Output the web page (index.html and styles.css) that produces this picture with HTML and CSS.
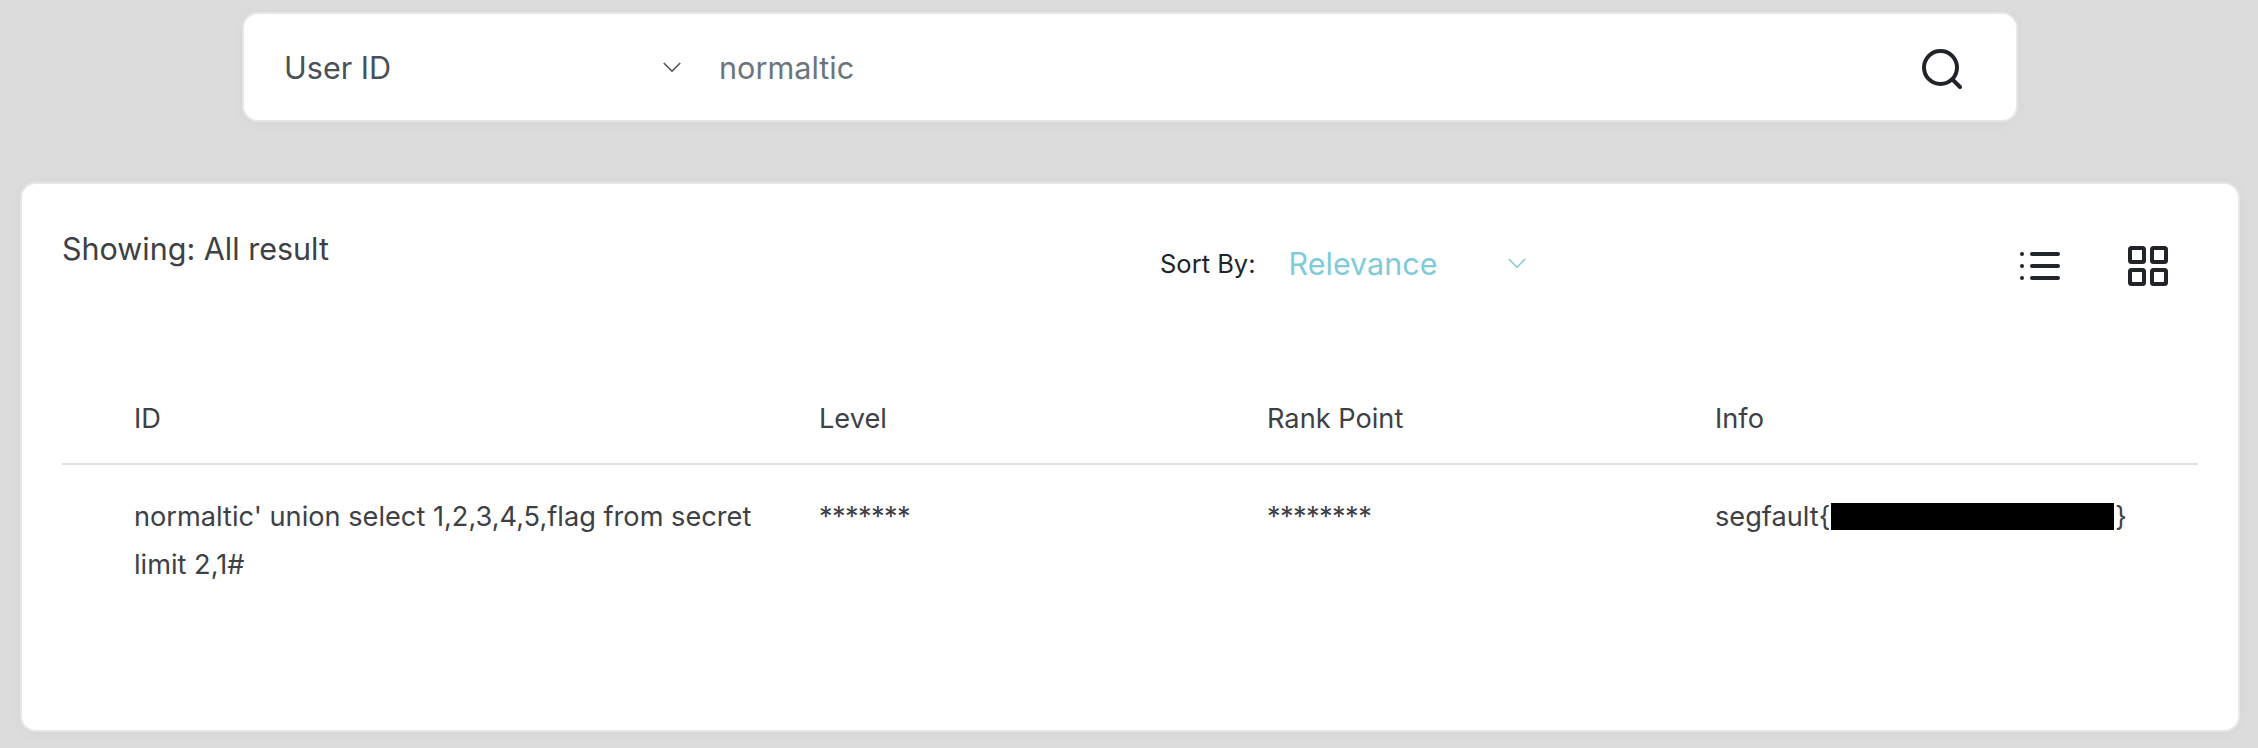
FILE: index.html
```html
<!DOCTYPE html>
<html lang="en">
<head>
    <meta charset="UTF-8">
    <meta name="viewport" content="width=device-width, initial-scale=1.0">
    <title>Ranking</title>
    <link rel="stylesheet" href="styles.css">
</head>
<body>
    <div class="search-card">
        <div class="search-type">
            <span>User ID</span>
            <svg class="chevron" width="18" height="11" viewBox="0 0 18 11"><path d="M.8 1 9 9.2 17.2 1"/></svg>
        </div>
        <div class="search-value">normaltic</div>
        <svg class="search-icon" width="40" height="40" viewBox="0 0 40 40"><circle cx="18.5" cy="18.5" r="16.5"/><path d="m30.5 30.5 7.5 7.5"/></svg>
    </div>

    <div class="result-card">
        <div class="toolbar">
            <div class="showing">Showing: All result</div>
            <div class="sort">
                <span class="sort-label">Sort By:</span>
                <span class="sort-value">Relevance</span>
                <svg class="chevron chevron-teal" width="18" height="11" viewBox="0 0 18 11"><path d="M.8 1 9 9.2 17.2 1"/></svg>
            </div>
            <div class="views">
                <svg class="view-icon" width="40" height="28" viewBox="0 0 40 28"><circle cx="2" cy="2" r="2" class="dot"/><circle cx="2" cy="14" r="2" class="dot"/><circle cx="2" cy="26" r="2" class="dot"/><path d="M12 2h26M12 14h26M12 26h26"/></svg>
                <svg class="view-icon" width="40" height="40" viewBox="0 0 40 40"><rect x="2" y="2" width="14" height="14" rx="1.5"/><rect x="24" y="2" width="14" height="14" rx="1.5"/><rect x="2" y="24" width="14" height="14" rx="1.5"/><rect x="24" y="24" width="14" height="14" rx="1.5"/></svg>
            </div>
        </div>

        <table class="results">
            <colgroup>
                <col class="col-id">
                <col class="col-mid">
                <col class="col-mid">
                <col>
            </colgroup>
            <thead>
                <tr>
                    <th>ID</th>
                    <th>Level</th>
                    <th>Rank Point</th>
                    <th>Info</th>
                </tr>
            </thead>
            <tbody>
                <tr>
                    <td>normaltic' union select 1,2,3,4,5,flag from secret limit 2,1#</td>
                    <td class="stars">*******</td>
                    <td class="stars">********</td>
                    <td class="info">segfault{<span class="redacted"></span>}</td>
                </tr>
            </tbody>
        </table>
    </div>
</body>
</html>
```

FILE: styles.css
```css
* {
    box-sizing: border-box;
}
body {
    font-family: Inter, "Liberation Sans", sans-serif;
    background-color: #dcdcdc;
    margin: 0;
    padding: 12px 18px 0 20px;
    height: 748px;
    overflow: hidden;
    color: #3d4145;
}
.search-card {
    display: flex;
    align-items: center;
    width: 1776px;
    height: 110px;
    margin-left: 222px;
    padding: 0 54px 0 40px;
    background-color: white;
    border: 2px solid #e6e7ea;
    border-radius: 16px;
    box-shadow: 0 2px 16px rgba(0, 0, 0, 0.03);
}
.search-type {
    display: flex;
    align-items: center;
    justify-content: space-between;
    width: 397px;
    font-size: 30.6px;
    color: #495057;
}
.search-value {
    flex: 1;
    margin-left: 38px;
    font-size: 30.6px;
    color: #6c757d;
}
.chevron {
    fill: none;
    stroke: #495057;
    stroke-width: 1.6;
}
.chevron-teal {
    stroke: #7fcbd9;
}
.search-icon {
    margin-top: 3px;
    fill: none;
    stroke: #212529;
    stroke-width: 4;
    stroke-linecap: round;
}
.result-card {
    height: 550px;
    margin-top: 60px;
    padding: 0 40px;
    background-color: white;
    border: 2px solid #e6e7ea;
    border-radius: 16px;
    box-shadow: 0 2px 16px rgba(0, 0, 0, 0.03);
}
.toolbar {
    display: flex;
    align-items: flex-start;
    height: 192px;
}
.showing {
    width: 1098px;
    padding-top: 46px;
    font-size: 30.5px;
}
.sort {
    display: flex;
    align-items: center;
    height: 159px;
}
.sort-label {
    font-size: 25.5px;
    color: #212529;
}
.sort-value {
    width: 219px;
    margin-left: 33px;
    font-size: 30.5px;
    color: #7fcbd9;
}
.views {
    display: flex;
    align-items: center;
    gap: 68px;
    height: 163px;
    margin-left: auto;
    padding-right: 30px;
}
.view-icon {
    fill: none;
    stroke: #212529;
    stroke-width: 4;
    stroke-linecap: round;
}
.view-icon .dot {
    fill: #212529;
    stroke: none;
}
.results {
    width: 100%;
    table-layout: fixed;
    border-collapse: collapse;
    font-size: 27.2px;
    line-height: 48px;
}
.col-id {
    width: 727px;
}
.col-mid {
    width: 448px;
}
.results th {
    height: 88px;
    padding: 0 0 1px 30px;
    font-weight: 400;
    text-align: left;
    border-bottom: 2px solid #dee2e6;
}
.results td {
    padding: 28px 0 0 30px;
    vertical-align: top;
}
.results th:first-child,
.results td:first-child {
    padding-left: 72px;
}
.stars {
    letter-spacing: -0.6px;
}
.info {
    white-space: nowrap;
}
.redacted {
    display: inline-block;
    width: 283px;
    height: 27px;
    margin: 0 1px;
    background-color: black;
    vertical-align: -4px;
}
```
